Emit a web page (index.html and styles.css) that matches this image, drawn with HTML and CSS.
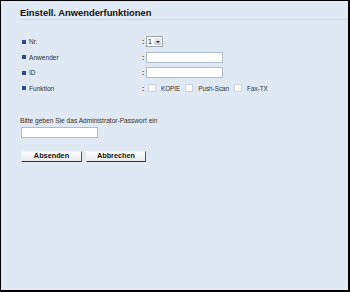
FILE: index.html
```html
<!DOCTYPE html>
<html lang="de">

<head>
    <meta charset="UTF-8">
    <meta name="viewport" content="width=device-width, initial-scale=1.0">
    <title>Einstell. Anwenderfunktionen</title>
    <link rel="stylesheet" href="styles.css">
</head>

<body>
    <div class="window">
        <h1 class="title">Einstell. Anwenderfunktionen</h1>

        <!-- Eingabefelder -->
        <div class="rows">
            <div class="row">
                <span class="label"><i class="bullet"></i>Nr.</span>
                <span class="colon">:</span>
                <span class="select"><span class="select-value">1</span><span class="select-arrow"></span></span>
            </div>
            <div class="row">
                <span class="label"><i class="bullet"></i>Anwender</span>
                <span class="colon">:</span>
                <input type="text" class="field">
            </div>
            <div class="row">
                <span class="label"><i class="bullet"></i>ID</span>
                <span class="colon">:</span>
                <input type="text" class="field">
            </div>
            <div class="row">
                <span class="label"><i class="bullet"></i>Funktion</span>
                <span class="colon">:</span>
                <span class="checks">
                    <span class="check"><i class="box"></i>KOPIE</span>
                    <span class="check"><i class="box"></i>Push-Scan</span>
                    <span class="check"><i class="box"></i>Fax-TX</span>
                </span>
            </div>
        </div>

        <!-- Administrator-Passwort -->
        <div class="admin">
            <p class="hint">Bitte geben Sie das Administrator-Passwort ein</p>
            <input type="password" class="field pass">
        </div>

        <div class="buttons">
            <button class="btn">Absenden</button>
            <button class="btn">Abbrechen</button>
        </div>
    </div>
</body>

</html>
```

FILE: styles.css
```css
html,
body {
    margin: 0;
    padding: 0;
}

body {
    font-family: "Liberation Sans", Arial, sans-serif;
    font-size: 6.6px;
    color: #1a1a1a;
}

.window {
    box-sizing: border-box;
    width: 350px;
    height: 292px;
    background-color: #dfe8f3;
    border: 1px solid #000;
    border-right-width: 2px;
    border-bottom-width: 2px;
    padding: 6px 0 0 19px;
}

.title {
    margin: 0;
    font-size: 9.4px;
    font-weight: bold;
    color: #111;
    line-height: 11px;
    padding-bottom: 1px;
    border-bottom: 1px solid #c6d6e8;
}

.rows {
    margin-top: 16px;
    display: flex;
    flex-direction: column;
    gap: 4.6px;
}

.row {
    display: flex;
    align-items: center;
    height: 11px;
}

.label {
    width: 122px;
    display: flex;
    align-items: center;
    color: #333;
}

.bullet {
    display: inline-block;
    width: 4px;
    height: 4px;
    background-color: #2d4b80;
    margin: 0 3px 0 2px;
}

.colon {
    width: 4px;
    font-weight: bold;
    color: #333;
}

.select {
    display: flex;
    align-items: center;
    box-sizing: border-box;
    width: 17px;
    height: 11px;
    background-color: #fff;
    border: 1px solid #9aa8b8;
}

.select-value {
    flex: 1;
    padding-left: 1px;
    font-size: 7px;
}

.select-arrow {
    width: 7px;
    height: 7px;
    margin-right: 1px;
    background: #d8d8d8 linear-gradient(#efefef, #c8c8c8);
    position: relative;
}

.select-arrow::after {
    content: "";
    position: absolute;
    left: 1.5px;
    top: 2.5px;
    border-left: 2px solid transparent;
    border-right: 2px solid transparent;
    border-top: 2px solid #222;
}

.field {
    box-sizing: border-box;
    width: 77px;
    height: 11px;
    margin: 0;
    padding: 0 2px;
    border: 1px solid #aebccc;
    background-color: #fff;
    font-size: 7px;
}

.checks {
    display: flex;
    align-items: center;
}

.check {
    display: flex;
    align-items: center;
    margin-right: 3px;
    color: #333;
    font-size: 6.3px;
}

.box {
    display: inline-block;
    box-sizing: border-box;
    width: 8px;
    height: 8px;
    background-color: #fff;
    border: 1px solid #c9d3de;
    margin: 0 5px 0 2px;
}

.admin {
    margin-top: 23px;
}

.hint {
    margin: 0 0 3px;
    color: #333;
}

.pass {
    margin-left: 1px;
}

.buttons {
    margin-top: 13px;
    margin-left: 1px;
    display: flex;
    gap: 4px;
}

.btn {
    box-sizing: border-box;
    width: 61px;
    height: 11px;
    padding: 0;
    font-family: "Liberation Sans", Arial, sans-serif;
    font-size: 7.3px;
    font-weight: bold;
    color: #111;
    background: linear-gradient(#ffffff, #e8e8e8);
    border: 1px solid #f4f4f4;
    border-right-color: #555;
    border-bottom-color: #333;
    line-height: 8px;
}

.btn + .btn {
    width: 60px;
}
```
